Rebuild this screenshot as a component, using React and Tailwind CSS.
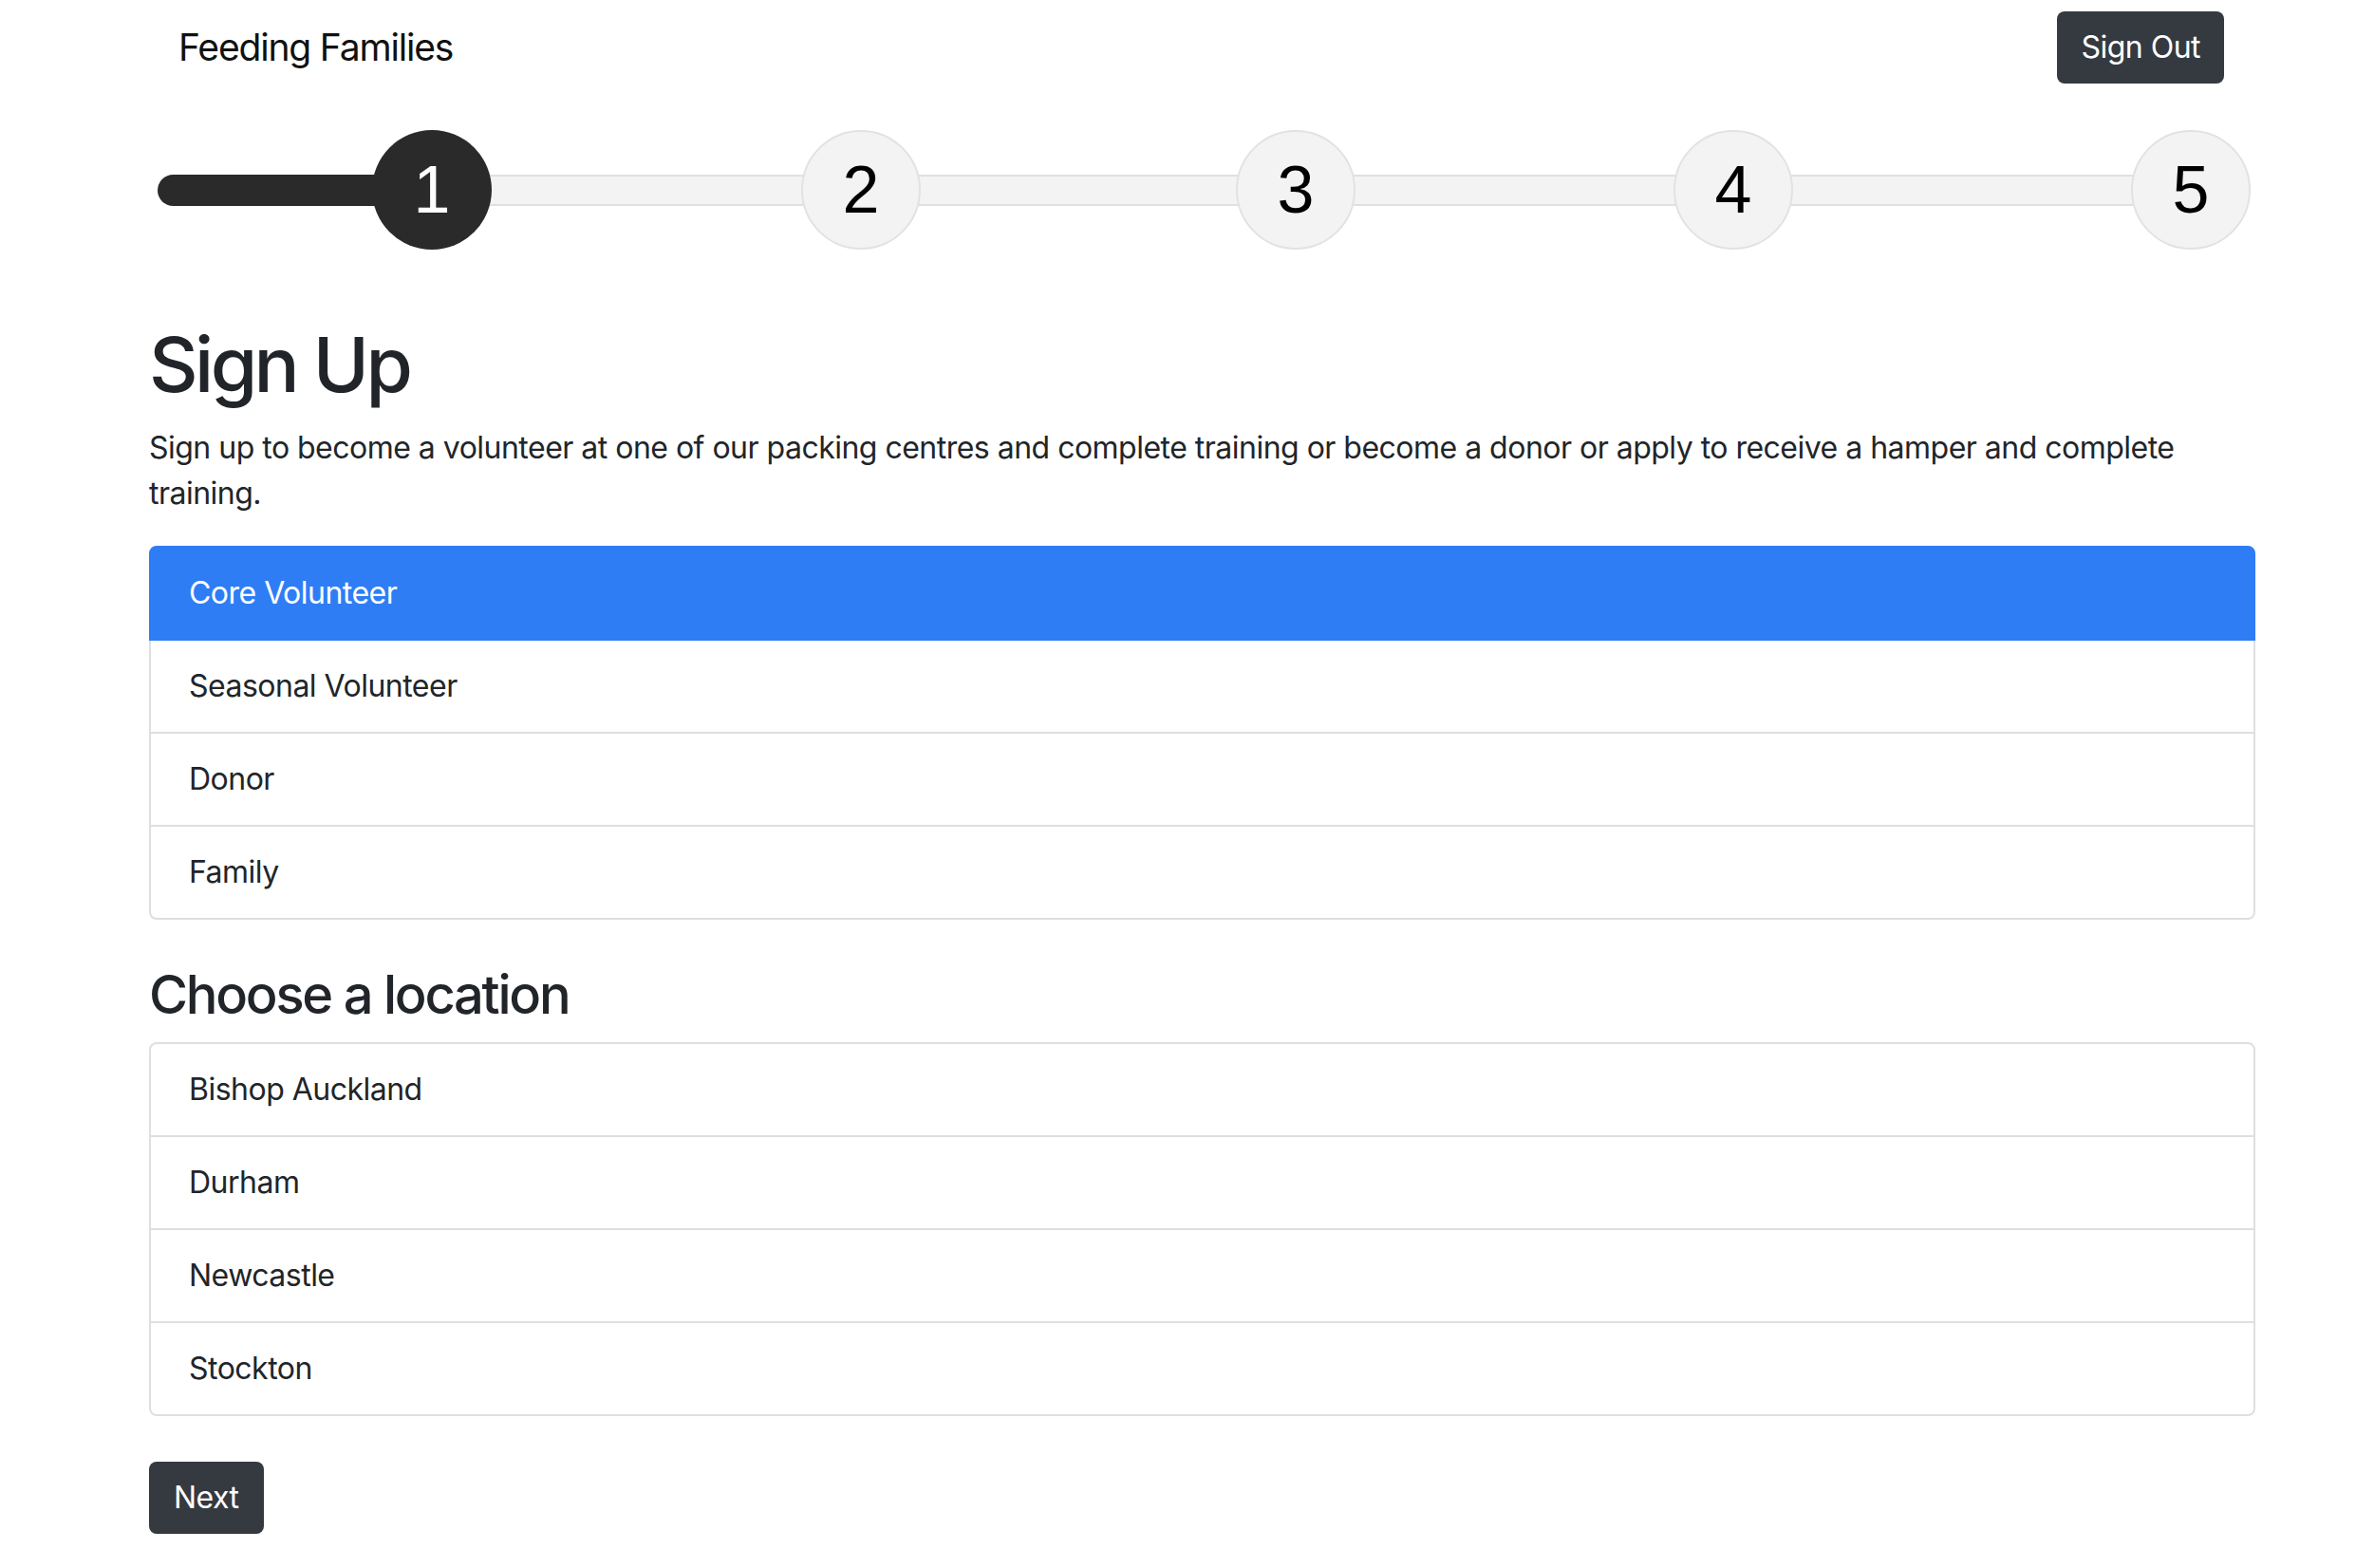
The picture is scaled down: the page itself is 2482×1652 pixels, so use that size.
import { useState } from "react";

const roles = ["Core Volunteer", "Seasonal Volunteer", "Donor", "Family"];
const locations = ["Bishop Auckland", "Durham", "Newcastle", "Stockton"];

function Step({ n, active, className }) {
  return (
    <div
      className={
        "relative z-10 flex h-[126px] w-[126px] shrink-0 items-center justify-center rounded-full font-['Liberation_Sans',Arial,sans-serif] text-[70px] leading-none tracking-normal " +
        (active
          ? "bg-[#2a2a2a] text-white"
          : "border-2 border-[#e2e2e2] bg-[#f3f3f3] text-black ") +
        " " +
        className
      }
    >
      {n}
    </div>
  );
}

function ListGroup({ items, selected, onSelect }) {
  return (
    <div className="flex flex-col">
      {items.map((item, i) => (
        <button
          key={item}
          onClick={() => onSelect(item)}
          className={
            "relative border-2 px-[40px] py-[24px] text-left text-[32px] leading-[48px] " +
            (i > 0 ? "-mt-[2px] " : "rounded-t-[8px] ") +
            (i === items.length - 1 ? "rounded-b-[8px] " : "") +
            (selected === item
              ? "z-10 border-[#2f7df5] bg-[#2f7df5] text-white"
              : "border-[#dfdfdf] bg-white text-[#212529]")
          }
        >
          {item}
        </button>
      ))}
    </div>
  );
}

export default function App() {
  const [role, setRole] = useState("Core Volunteer");
  const [location, setLocation] = useState(null);

  return (
    <div className="min-h-screen w-full bg-white font-['Inter','Noto_Sans',sans-serif] tracking-[-0.032em] text-[#212529]">
      {/* navbar */}
      <div className="flex items-center justify-between pl-[188px] pr-[139px] pt-[12px]">
        <span className="text-[39px] leading-[60px] tracking-[-0.03em] text-[#111]">Feeding Families</span>
        <button className="h-[76px] rounded-[8px] bg-[#343a40] px-[25px] text-[32px] leading-[48px] text-white">
          Sign Out
        </button>
      </div>

      {/* progress steps */}
      <div className="relative ml-[166px] mt-[49px] w-[2204px]">
        <div className="absolute left-0 top-[47px] flex h-[33px] w-[2140px]">
          <div className="h-full w-[260px] rounded-l-full bg-[#2a2a2a]"></div>
          <div className="h-full flex-1 border-y-2 border-[#e0e0e0] bg-[#f3f3f3]"></div>
        </div>
        <div className="flex">
          <Step n="1" active className="ml-[226px]" />
          <Step n="2" className="ml-[326px]" />
          <Step n="3" className="ml-[332px]" />
          <Step n="4" className="ml-[335px]" />
          <Step n="5" className="ml-[356px]" />
        </div>
      </div>

      {/* main content */}
      <div className="ml-[157px] w-[2219px] pb-[40px] pt-[73px]">
        <h1 className="mb-[16px] text-[80px] font-medium leading-[96px] tracking-[-0.045em]">Sign Up</h1>
        <p className="mb-[31px] text-[32px] leading-[48px]">
          Sign up to become a volunteer at one of our packing centres and complete training or become a
          donor or apply to receive a hamper and complete training.
        </p>

        <ListGroup items={roles} selected={role} onSelect={setRole} />

        <h2 className="mb-[16px] mt-[46px] text-[56px] font-medium leading-[67px] tracking-[-0.04em]">
          Choose a location
        </h2>

        <ListGroup items={locations} selected={location} onSelect={setLocation} />

        <button className="mt-[48px] h-[76px] rounded-[8px] bg-[#343a40] px-[26px] text-[32px] leading-[48px] text-white">
          Next
        </button>
      </div>
    </div>
  );
}
